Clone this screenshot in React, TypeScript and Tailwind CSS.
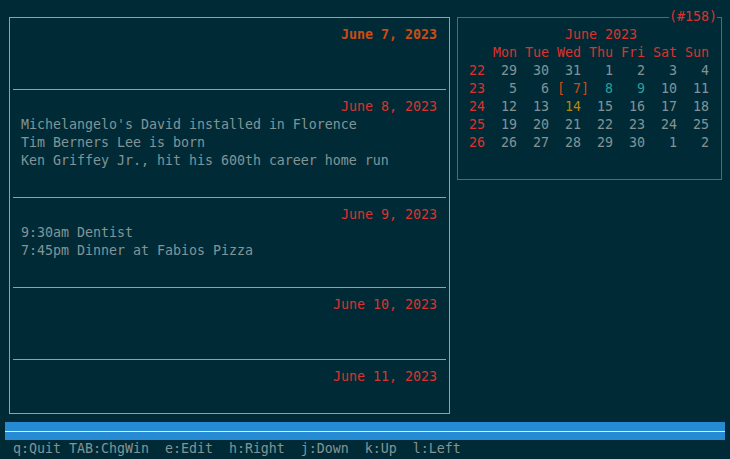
import React from 'react';

const RED = 'text-[#dc322f]';

type Day = { text: string; color?: string };

const weeks: { num: string; days: Day[] }[] = [
  { num: '22', days: [{ text: '  29  30  31   1   2   3   4' }] },
  {
    num: '23',
    days: [
      { text: '   5   6 ' },
      { text: '[ 7]', color: 'text-[#cb4b16]' },
      { text: '  ' },
      { text: '8', color: 'text-[#2aa198]' },
      { text: '   ' },
      { text: '9', color: 'text-[#2aa198]' },
      { text: '  10  11' },
    ],
  },
  {
    num: '24',
    days: [
      { text: '  12  13  ' },
      { text: '14', color: 'text-[#b58900]' },
      { text: '  15  16  17  18' },
    ],
  },
  { num: '25', days: [{ text: '  19  20  21  22  23  24  25' }] },
  { num: '26', days: [{ text: '  26  27  28  29  30   1   2' }] },
];

const entries = [
  { date: 'June 7, 2023', bold: true, lines: [] as string[], rows: 3 },
  {
    date: 'June 8, 2023',
    lines: [
      "Michelangelo's David installed in Florence",
      'Tim Berners Lee is born',
      'Ken Griffey Jr., hit his 600th career home run',
    ],
    rows: 5,
  },
  { date: 'June 9, 2023', lines: ['9:30am Dentist', '7:45pm Dinner at Fabios Pizza'], rows: 4 },
  { date: 'June 10, 2023', lines: [], rows: 3 },
  { date: 'June 11, 2023', lines: [], rows: 2 },
];

function Separator() {
  return (
    <div className="h-[18px] pt-[9px] px-[3px]">
      <div className="h-px bg-[#93a1a1]" />
    </div>
  );
}

function DayList() {
  return (
    <div className="w-[441px] h-[397px] border border-[#93a1a1] pt-[8px]">
      {entries.map((e, i) => (
        <div key={i}>
          <div style={{ height: e.rows * 18 }}>
            <div className={`text-right pr-[12px] whitespace-pre ${e.bold ? 'font-bold text-[#cb4b16]' : RED}`}>
              {e.date}
            </div>
            {e.lines.map((l, j) => (
              <div key={j} className="pl-[11px] whitespace-pre">
                {l}
              </div>
            ))}
          </div>
          {i < entries.length - 1 && <Separator />}
        </div>
      ))}
    </div>
  );
}

function Calendar() {
  return (
    <div className="relative w-[265px] h-[163px] border border-[#dc322f] pt-[8px] pl-[3px]">
      <span className={`absolute top-[-10px] left-[211px] bg-[#002b36] whitespace-pre ${RED}`}>(#158)</span>
      <div className={`whitespace-pre ${RED}`}>{'             June 2023'}</div>
      <div className={`whitespace-pre ${RED}`}>{'    Mon Tue Wed Thu Fri Sat Sun'}</div>
      {weeks.map((w) => (
        <div key={w.num} className="whitespace-pre">
          <span className={RED}>{' ' + w.num}</span>
          {w.days.map((d, k) => (
            <span key={k} className={d.color}>
              {d.text}
            </span>
          ))}
        </div>
      ))}
    </div>
  );
}

export default function App() {
  return (
    <div className="w-[730px] h-[459px] overflow-hidden bg-[#002b36] text-[#839496] font-['DejaVu_Sans_Mono',monospace] text-[13.29px] leading-[18px]">
      <div className="pt-[8px] pl-[5px] w-[725px]">
        <div className="flex h-[414px]">
          <div className="w-[448px] pl-[4px] pt-[9px]">
            <DayList />
          </div>
          <div className="pl-[4px] pt-[9px]">
            <Calendar />
          </div>
        </div>
        <div className="w-[720px] h-[18px] bg-[#268bd2] pt-[9px]">
          <div className="h-px bg-[#eee8d5]" />
        </div>
        <div className="whitespace-pre h-[18px]">{' q:Quit TAB:ChgWin  e:Edit  h:Right  j:Down  k:Up  l:Left'}</div>
      </div>
    </div>
  );
}
